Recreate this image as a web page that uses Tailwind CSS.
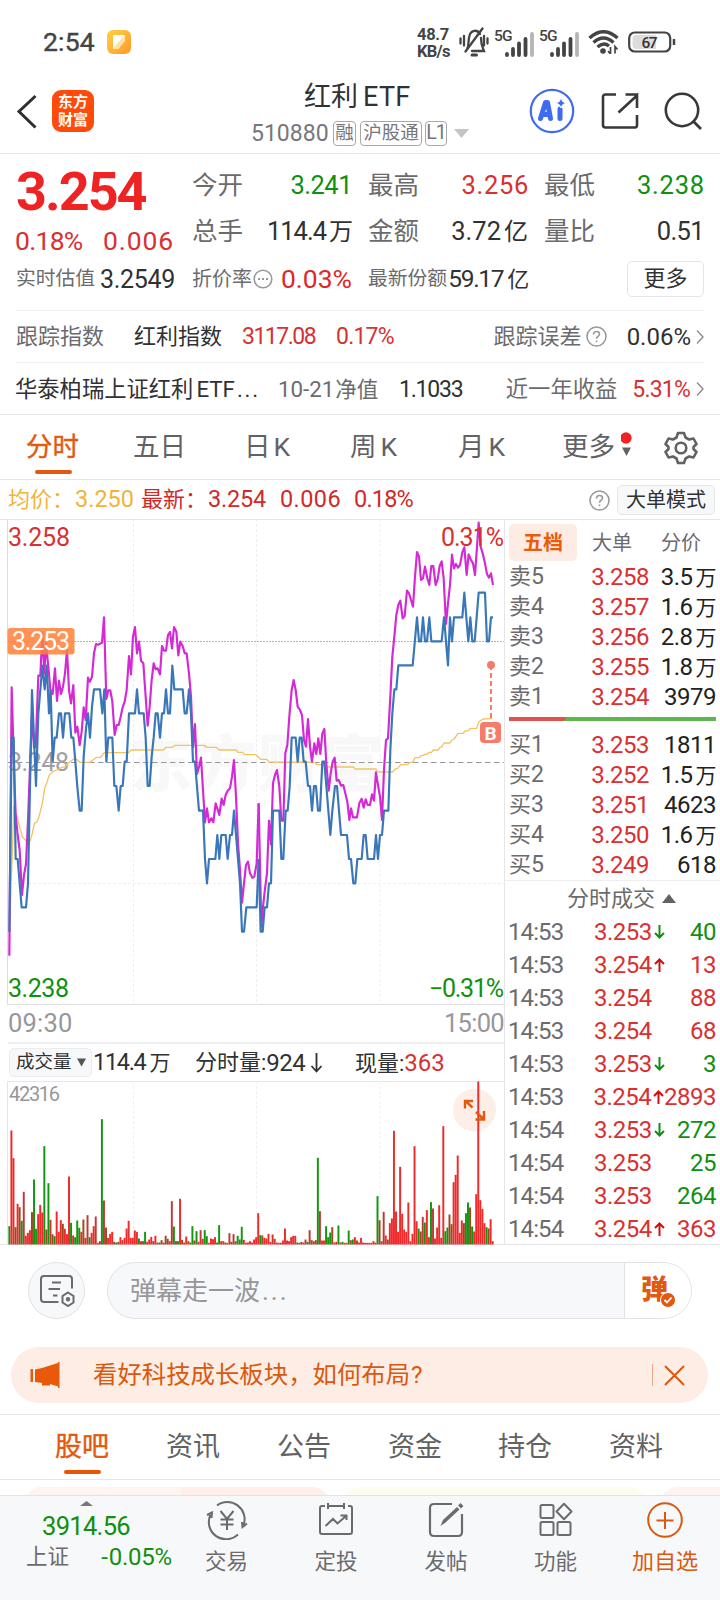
<!DOCTYPE html>
<html lang="zh-CN">
<head>
<meta charset="utf-8">
<title>红利ETF 510880</title>
<script src="https://cdn.jsdelivr.net/npm/@tailwindcss/browser@4"></script>
</head>
<body class="w-[720px] h-[1600px] overflow-hidden bg-white text-[#303133] [font-family:Roboto,'Noto_Sans_CJK_SC',sans-serif] whitespace-nowrap leading-none">
<div class="flex flex-col h-[1600px]">

<!-- status bar -->
<div class="h-[84px] shrink-0 flex items-center pl-[43px] pr-[40px] text-[#444]">
  <span class="text-[26.500px] w-[64px] pt-px tracking-[0.200px] [-webkit-text-stroke:0.4px_#444]">2:54</span>
  <svg width="24" height="24" viewBox="0 0 24 24"><defs><linearGradient id="note" x1="0" y1="0" x2="1" y2="1"><stop offset="0" stop-color="#ffd044"/><stop offset="1" stop-color="#ff9a2a"/></linearGradient></defs><rect width="24" height="24" rx="6" fill="url(#note)"/><path d="M6 5H18L6 19Z" fill="#fff"/><path d="M18 5V11L11.500 19H6Z" fill="#ffe3a6"/></svg>
  <div class="ml-[286px] w-[36px] pt-[2px] text-[16.500px] leading-[17.500px] font-bold"><div class="tracking-[-0.300px]">48.7</div><div class="tracking-[-0.700px]">KB/s</div></div>
  <svg class="ml-[6px]" width="30" height="34" viewBox="0 0 30 34" fill="none" stroke="#444" stroke-width="2.300" stroke-linecap="round"><path d="M1.500 13.500V18.500M5 11V20.500M25 11V20.500M28.500 13.500V18.500"/><path d="M8.500 23C10 20 9 15 10.500 10.500C12 5 18.500 4 21 9M22 13C22 20 23.500 22 25 26H13"/><path d="M6.500 26.500L23.500 3.500"/><path d="M13 30H17.500" stroke-width="3"/></svg>
  <div class="flex ml-[5px]">
    <div class="flex w-[45px] h-[31px]"><span class="text-[15.500px] font-medium w-[11px] pt-[2px] tracking-[-0.700px]">5G</span><svg class="mt-[3px]" width="31" height="27" viewBox="0 0 31 27" stroke-width="3.800" stroke="#444" stroke-linecap="round"><path d="M2 25V24M8 25V19M14 25V13.500M20.500 25V9"/><path d="M27 25V4" stroke="#b5b5b5"/></svg></div>
    <div class="flex w-[45px] h-[31px]"><span class="text-[15.500px] font-medium w-[11px] pt-[2px] tracking-[-0.700px]">5G</span><svg class="mt-[3px]" width="31" height="27" viewBox="0 0 31 27" stroke-width="3.800" stroke="#444" stroke-linecap="round"><path d="M2 25V24M8 25V19M14 25V13.500M20.500 25V9"/><path d="M27 25V4" stroke="#b5b5b5"/></svg></div>
  </div>
  <svg class="ml-[4px]" width="31" height="24" viewBox="0 0 31 24" fill="none" stroke="#444" stroke-width="3.400"><path d="M1.500 8Q15.500-4.500 29.500 8"/><path d="M5.500 12.500Q15.500 3.500 25.500 12.500"/><path d="M9.500 17Q15.500 11.500 21 16"/><circle cx="15" cy="21" r="2.800" fill="#444" stroke="none"/><path d="M22.500 17V24L20 21M27 23.500V16.500L29.500 19.500" stroke-width="1.700"/></svg>
  <svg class="ml-[9px]" width="48" height="22" viewBox="0 0 48 22"><rect x="1.200" y="1.500" width="41" height="19" rx="5.500" fill="#fff" stroke="#444" stroke-width="2.200"/><path d="M8 4H28V18H8Q4.500 18 4.500 14V8Q4.500 4 8 4" fill="#dcdcdc"/><path d="M46 8V14" stroke="#444" stroke-width="2.500"/><text x="21.500" y="16.500" text-anchor="middle" font-size="15.500" fill="#333" font-weight="500" textLength="16">67</text></svg>
</div>

<!-- title bar -->
<div class="h-[70px] shrink-0 border-b border-[#e6e6e8] flex items-center relative">
  <svg class="ml-[16px] mb-[14px]" width="22" height="36" viewBox="0 0 22 36" fill="none" stroke="#2f2f31" stroke-width="3"><path d="M19.500 2L3 17.500L19.500 33.500"/></svg>
  <div class="ml-[14px] mb-[15px] w-[42px] h-[42px] rounded-[9px] bg-[#ff4a09] text-white text-[15px] font-bold leading-[18px] text-center pt-[3px]">东方<br>财富</div>
  <div class="flex flex-col absolute left-[251px] top-[-5px] w-[220px]">
    <div class="h-[36px] pl-[53px] text-[27px] leading-[36px]">红利<span class="ml-[5px] tracking-[0.300px]">ETF</span></div>
    <div class="h-[36px] flex items-center gap-[3px] text-[#77777a]">
      <span class="text-[23px] w-[79px]">510880</span>
      <span class="border border-[#a8a8aa] rounded-[4px] h-[25px] w-[23px] flex items-center justify-center text-[18.500px]">融</span>
      <span class="border border-[#a8a8aa] rounded-[4px] h-[25px] w-[62px] flex items-center justify-center text-[18.500px] ml-px">沪股通</span>
      <span class="border border-[#a8a8aa] rounded-[4px] h-[25px] w-[22px] flex items-center justify-center text-[19.500px] tracking-[-1px]">L1</span>
      <svg class="ml-[4px]" width="15" height="9" viewBox="0 0 15 9"><path d="M0 0H15L7.500 9Z" fill="#c4c4c6"/></svg>
    </div>
  </div>
  <div class="ml-auto flex items-center gap-[25px] pr-[18px] mb-[15px]">
    <svg class="mr-[1px]" width="46" height="46" viewBox="0 0 46 46"><circle cx="23" cy="23" r="21.200" fill="#fff" stroke="#3f6bf0" stroke-width="2.200"/><g fill="none" stroke="#3f6bf0" stroke-width="5" stroke-linejoin="round" stroke-linecap="round"><path d="M11.500 30.500L16.500 14.500H18.500L21.500 30.500M14.500 26.500H20.500"/><path d="M31 21V30.500"/></g><path d="M32 9.500L33.600 13.400L37 15L33.600 16.800L32 20L30.400 16.800L27 15L30.400 13.400Z" fill="#3f6bf0" stroke="#fff" stroke-width="1"/></svg>
    <svg width="38" height="38" viewBox="0 0 38 38" fill="none" stroke="#38383a" stroke-width="2.600"><path d="M15 2.500H4.500Q2 2.500 2 5V33Q2 35.500 4.500 35.500H34Q36 35.500 36 33V23M36 16V3.500L17.500 20.500M24.500 2.500H36.500"/></svg>
    <svg width="38" height="38" viewBox="0 0 38 38" fill="none" stroke="#38383a" stroke-width="2.600"><circle cx="18" cy="18" r="16.200"/><path d="M29 29L37 37"/></svg>
  </div>
</div>

<!-- quote panel -->
<div class="h-[261px] shrink-0 border-b border-[#e6e6e8] px-[16px] flex flex-col">
  <div class="h-[156px] flex">
    <div class="w-[176px] flex flex-col">
      <div class="h-[76px] flex items-center text-[54px] font-bold text-[#ee2424] tracking-[-2px]">3.254</div>
      <div class="h-[22px] flex items-center text-[26.500px] text-[#d93030]"><span class="w-[88px] tracking-[-0.700px] ml-[-1px]">0.18%</span><span class="tracking-[0.900px]">0.006</span></div>
      <div class="h-[52px] mt-px flex items-center text-[19.800px] text-[#6b6b6e]"><span class="w-[84px]">实时估值</span><span class="text-[25px] text-[#303133] tracking-[-0.300px]">3.2549</span></div>
    </div>
    <div class="w-[512px] grid grid-cols-[160px_16px_160px_16px_160px] grid-rows-[47px_46px_48px] pt-[8px] items-center text-[25.500px] text-[#6b6b6e]">
      <div class="flex justify-between"><span>今开</span><span class="text-[#109010] tracking-[-0.500px]">3.241</span></div><i></i>
      <div class="flex justify-between"><span>最高</span><span class="text-[#d93030] tracking-[0.700px] mr-[-1px]">3.256</span></div><i></i>
      <div class="flex justify-between"><span>最低</span><span class="text-[#109010] tracking-[0.800px] mr-[-1px]">3.238</span></div>
      <div class="flex justify-between"><span>总手</span><span class="text-[#303133] tracking-[-1px]">114.4<span class="ml-[3px] text-[24px]">万</span></span></div><i></i>
      <div class="flex justify-between"><span>金额</span><span class="text-[#303133]">3.72<span class="ml-[3px] text-[24px]">亿</span></span></div><i></i>
      <div class="flex justify-between"><span>量比</span><span class="text-[#303133] tracking-[-0.600px]">0.51</span></div>
      <div class="flex justify-between items-center text-[20px]"><span>折价率</span><svg class="mr-auto ml-[1px]" width="20" height="20" viewBox="0 0 20 20" fill="none" stroke="#9a9a9c" stroke-width="1.600"><circle cx="10" cy="10" r="8.800"/><path d="M5 10H7M9 10H11M13 10H15" stroke-width="2"/></svg><span class="text-[26.500px] text-[#e02828]">0.03%</span></div><i></i>
      <div class="flex justify-between items-center text-[19.800px]"><span>最新份额</span><span class="text-[24.500px] text-[#303133] tracking-[-1.300px]">59.17<span class="ml-[4px] text-[22px]">亿</span></span></div><i></i>
      <div class="ml-auto w-[77px] h-[36px] border border-[#e4e5e8] rounded-[5px] flex items-center justify-center text-[22px] text-[#303133]">更多</div>
    </div>
  </div>
  <div class="h-[52px] border-t border-[#f2f2f4] flex items-center text-[22px] text-[#6b6b6e]">
    <span class="w-[118px]">跟踪指数</span><span class="w-[108px] text-[#303133]">红利指数</span><span class="w-[94px] text-[#d93030] text-[23px] tracking-[-1.500px]"><span>3117.08</span></span><span class="text-[#d93030] text-[23px] tracking-[-0.800px]">0.17%</span>
    <span class="ml-auto">跟踪误差</span><svg class="ml-[4px] mr-[20px]" width="21" height="21" viewBox="0 0 21 21" fill="none" stroke="#9a9a9c" stroke-width="1.600"><circle cx="10.500" cy="10.500" r="9.500"/><path d="M7.500 8.500Q7.500 5.500 10.500 5.500Q13.500 5.500 13.500 8Q13.500 9.500 11.800 10.500Q10.500 11.300 10.500 12.800M10.500 14.500V16.300"/></svg><span class="text-[#303133] text-[24px]">0.06%</span>
    <svg class="ml-[5px]" width="8" height="14" viewBox="0 0 8 14" fill="none" stroke="#8c8c8e" stroke-width="1.400"><path d="M1 0.500L7 7L1 13.500"/></svg>
  </div>
  <div class="h-[52px] pt-px border-t border-[#f2f2f4] flex items-center text-[22.300px] text-[#6b6b6e]">
    <span class="w-[263px] text-[#303133] ml-[-1px]">华泰柏瑞上证红利<span class="ml-[3px]">ETF</span><span class="tracking-[1.800px] ml-[2px]">...</span></span><span class="w-[121px]">10-21<span class="ml-[1px] text-[21.500px]">净值</span></span><span class="text-[#303133] text-[23px] tracking-[-1.200px]">1.1033</span>
    <span class="ml-auto mr-[15px]">近一年收益</span><span class="text-[#d93030] text-[23px] tracking-[-0.800px]">5.31%</span>
    <svg class="ml-[6px]" width="8" height="14" viewBox="0 0 8 14" fill="none" stroke="#8c8c8e" stroke-width="1.400"><path d="M1 0.500L7 7L1 13.500"/></svg>
  </div>
</div>

<!-- period tabs -->
<div class="h-[65px] pt-px shrink-0 border-b border-[#e6e6e8] flex items-center text-[26.500px] text-[#626265] relative">
  <span class="ml-[26px] w-[107px] text-[#e2590f] [-webkit-text-stroke:0.4px_#e2590f]">分时</span>
  <span class="w-[111px]">五日</span>
  <span class="w-[106px]">日<span class="ml-[3px]">K</span></span>
  <span class="w-[108px]">周<span class="ml-[4px]">K</span></span>
  <span class="w-[104px]">月<span class="ml-[4px]">K</span></span>
  <span class="w-[59px]">更多</span>
  <svg class="mb-[6px]" width="12" height="26" viewBox="0 0 12 26"><circle cx="5" cy="6" r="5.700" fill="#f02222"/><path d="M1 15.500H10L5.500 24Z" fill="#626265"/></svg>
  <svg class="ml-[31px]" width="34" height="34" viewBox="0 0 34 34" fill="none" stroke="#626265" stroke-width="2.600" stroke-linejoin="round"><path d="M14 2H20L21.500 6.500L25 8.500L29.500 7.500L32.500 13L29.500 16V18L32.500 21L29.500 26.500L25 25.500L21.500 27.500L20 32H14L12.500 27.500L9 25.500L4.500 26.500L1.500 21L4.500 18V16L1.500 13L4.500 7.500L9 8.500L12.500 6.500Z"/><circle cx="17" cy="17" r="5.300"/></svg>
  <div class="absolute left-[35px] bottom-[5px] w-[37px] h-[4px] rounded-full bg-[#e2590f]"></div>
</div>

<!-- price summary -->
<div class="h-[39px] pt-px shrink-0 flex items-center text-[22px] text-[#cf2a2a] pl-[8px] pr-[5px]">
  <span class="w-[67px] text-[#f2b33a]">均价：</span><span class="w-[66px] text-[#f2b33a] text-[23.500px]">3.250</span>
  <span class="w-[67px]">最新：</span><span class="w-[72px] text-[23.500px] tracking-[-0.200px]">3.254</span><span class="w-[74px] text-[23.500px] tracking-[0.400px]">0.006</span><span class="text-[23.500px] tracking-[-0.800px]">0.18%</span>
  <svg class="ml-auto mr-[7px]" width="21" height="21" viewBox="0 0 21 21" fill="none" stroke="#9a9a9c" stroke-width="1.600"><circle cx="10.500" cy="10.500" r="9.500"/><path d="M7.500 8.500Q7.500 5.500 10.500 5.500Q13.500 5.500 13.500 8Q13.500 9.500 11.800 10.500Q10.500 11.300 10.500 12.800M10.500 14.500V16.300"/></svg>
  <div class="w-[98px] h-[30px] rounded-[5px] border border-[#e4e6ea] bg-[#f7f8fa] flex items-center justify-center text-[20px] text-[#303133]">大单模式</div>
</div>

<!-- chart + order book -->
<div class="h-[726px] shrink-0 border-t border-b border-[#e6e6e8] flex">
  <div class="w-[505px] border-r border-[#e6e6e8] flex flex-col">
    <svg class="shrink-0" width="504" height="485" viewBox="0 520 504 485" fill="none">
      <g stroke="#efeff1" stroke-width="1" stroke-dasharray="3 2"><path d="M133.500 519V1004M256.500 519V1004M380 519V1004M8 883.500H504"/></g>
      <path d="M7.500 519V1004.500H504" stroke="#dedee0"/>
      <g fill="#f8f8f9" font-size="62" font-weight="900"><text x="130" y="787" textLength="254">东方财富</text></g>
      <path d="M8 641.500H504" stroke="#fb9d78" stroke-width="1" stroke-dasharray="2 1"/>
      <path d="M8 762.500H504" stroke="#97979a" stroke-width="1.200" stroke-dasharray="5.500 3.500"/>
      <text x="8" y="771" font-size="25" fill="#a0a0a2" textLength="61">3.248</text>
      <g transform="translate(0 510) scale(.33333)" stroke-linejoin="round">
        <g stroke="#f4c265" stroke-width="4">
          <polyline points="28,1265 38,1000 41,890 50,915 60,955 68,982 82,996 90,994 97,970 103,940 110,937 117,920 127,880 134,835 140,820 147,797 158,785 170,780 183,773 195,770 208,757 220,748 228,746 240,757 270,757 290,742 302,742 313,728 385,728 393,720 490,720 498,712 517,712 525,706 612,706 622,712 648,712 658,720 708,720 714,727 727,727 735,734 768,734"/>
          <polyline transform="translate(750 0)" points="18,734 32,748 50,748 57,756 195,757 200,764 225,764 230,771 310,771 316,777 378,777 384,786 428,786 436,777 443,775 452,764 473,764 479,757 488,757 495,743 507,743 513,737 519,737 525,733 531,733 538,727 544,727 550,720 564,720 570,712 576,710 582,699 600,699 606,690 612,687 624,670 640,670 645,663 655,662 660,656 680,655 686,636 699,627 727,626"/>
        </g>
        <g stroke="#d42ad6" stroke-width="6.500">
          <polyline points="28,1337 35,532 41,740 47,915 53,975 59,1020 66,1155 72,1095 78,1062 84,930 90,770 96,610 102,712 107,712 115,497 121,497 127,367 133,490 138,400 146,480 152,552 158,552 165,475 171,573 177,512 183,552 189,530 195,490 201,420 207,540 213,580 220,525 226,668 232,650 239,705 245,665 251,592 257,630 264,503 270,515 276,500 282,430 288,402 294,404 306,398 312,322 319,567 325,541 331,541 337,575 344,675 350,645 356,645 362,620 368,592 374,575 380,540 387,438 393,493 399,380 405,351 411,430 417,395 423,452 430,460 437,560 443,647 449,590 455,510 461,460 467,478 473,475 480,493 486,408 492,422 498,422 504,375 510,366 516,415 522,351 529,365 535,436 541,395 548,408 554,430 560,430 567,490 573,560 579,712 585,642 591,792 597,770 603,743 609,840 615,937 621,895 627,937 634,925 640,937 647,880 652,895 658,915 665,866 671,885 677,855 683,842 690,835 696,800 702,750 708,860 714,1000 720,1080 726,1178 732,1120 738,1065 744,1055 750,1090 757,1103 763,1100 770,1060 776,880"/>
          <polyline transform="translate(750 0)" points="26,880 34,1250 38,1200 44,1145 51,1090 57,932 63,1003 69,820 75,795 81,780 88,830 94,932 100,932 106,730 112,705 118,620 125,540 131,510 137,540 143,590 150,600 156,615 162,690 168,710 174,627 180,710 186,755 193,700 199,732 205,685 211,732 217,670 223,657 229,760 236,842 242,790 248,755 254,743 260,812 266,810 273,827 280,825 286,850 292,875 298,930 303,895 309,922 321,922 328,880 335,866 341,893 347,868 353,885 360,885 366,853 372,872 378,787 384,825 390,860 396,930 402,780 408,690 414,685 421,560 427,440 433,380 439,315 445,285 451,272 458,325 464,318 471,242 477,250 483,270 489,290 495,200 501,126 507,140 513,210 519,205 525,170 532,205 538,225 544,168 550,168 557,225 563,208 569,168 575,154 581,205 588,342 594,280 600,225 606,134 612,175 618,162 624,173 630,165 637,127 643,112 650,195 656,133 663,150 669,160 675,195 680,125 686,38 692,110 698,130 705,160 711,192 717,203 723,190 729,225"/>
        </g>
        <g stroke="#3a77b8" stroke-width="6.500">
          <polyline points="28,1265 35,683 41,683 47,1047 53,1047 65,1192 78,1192 84,1120 90,830 96,540 108,828 115,610 121,540 127,467 134,538 140,467 147,610 152,540 158,755 164,683 170,683 177,610 183,610 189,683 195,610 208,610 214,683 220,683 226,755 232,830 239,902 245,902 251,740 258,655 264,610 270,683 276,590 282,538 300,538 307,610 313,538 319,755 325,683 337,683 343,828 349,828 356,902 362,828 368,828 374,755 380,755 387,610 405,610 411,538 417,610 431,610 437,683 443,828 449,828 455,740 461,683 467,610 473,610 480,683 486,610 492,610 498,538 504,610 510,610 517,467 523,538 548,538 554,610 560,610 567,538 573,610 579,755 585,755 591,830 597,902 609,902 615,1047 621,1120 627,1047 646,1047 652,975 658,1047 664,975 677,975 683,1047 690,975 696,975 702,902 708,975 714,1047 720,1120 726,1265 732,1265 739,1192 770,1192 776,1047"/>
          <polyline transform="translate(750 0)" points="26,1047 32,1265 38,1265 44,1192 51,1192 57,1120 63,1120 69,902 88,902 94,1047 100,1047 107,902 113,902 119,830 125,683 137,683 143,755 149,683 155,683 161,755 167,755 174,828 180,828 186,902 192,828 198,828 204,902 210,902 217,755 223,755 229,828 241,975 247,902 255,828 261,828 267,902 273,975 291,975 297,1047 303,1047 310,1120 316,1120 322,1047 335,1047 341,975 347,975 353,1047 372,1047 378,975 384,1047 390,975 396,975 402,902 415,902 421,720 427,610 433,538 439,538 445,466 488,466 494,400 501,322 507,394 513,394 519,322 525,394 531,394 538,322 544,394 575,394 582,322 588,394 594,466 600,322 606,394 612,322 637,322 643,248 649,322 655,394 661,322 667,394 674,394 680,322 686,248 705,248 711,394 717,394 723,322 729,322"/>
        </g>
      </g>
      <g font-size="25">
        <text x="8" y="546" fill="#d93030" textLength="62">3.258</text>
        <text x="441" y="546" fill="#d93030" textLength="63">0.31%</text>
        <text x="8" y="997" fill="#109010" textLength="61">3.238</text>
        <text x="429" y="997" fill="#109010" textLength="75">−0.31%</text>
        <rect x="7.500" y="628" width="67" height="26.500" rx="3" fill="#ff8038" fill-opacity=".86"/>
        <text x="12" y="650" fill="#fff" textLength="58">3.253</text>
      </g>
      <path d="M491 665V718" stroke="#f77b6b" stroke-width="2" stroke-dasharray="5 3"/><circle cx="491" cy="665" r="4" fill="#f77b6b"/>
      <rect x="480" y="722" width="21" height="21" rx="4" fill="#f77b6b"/><text x="490.500" y="739.500" font-size="19" font-weight="700" fill="#fff" text-anchor="middle">B</text>
    </svg>
    <div class="h-[37px] pt-px shrink-0 flex items-center justify-between pl-[8px] text-[25.500px] text-[#97979a]"><span class="tracking-[0.200px]">09:30</span><span class="tracking-[-0.700px]">15:00</span></div>
    <div class="h-[39px] shrink-0 ml-[8px] border-t-2 border-[#efeff1] flex items-center text-[23px]">
      <div class="w-[83px] h-[29px] ml-px rounded-[5px] border border-[#ebecef] bg-[#f7f8fa] flex items-center pl-[6px] text-[18.500px]">成交量<svg class="ml-[5px]" width="9" height="9" viewBox="0 0 9 9"><path d="M0 0.500H9L4.500 8.500Z" fill="#555"/></svg></div>
      <span class="w-[102px] text-[23.500px] tracking-[-1.300px] ml-px">114.4<span class="ml-[4px] text-[21px]">万</span></span>
      <span class="w-[160px] text-[22px] flex items-center">分时量:<span class="text-[24px] tracking-[-0.500px]">924</span><svg class="ml-[5px]" width="13" height="20" viewBox="0 0 13 20" fill="none" stroke="#303133" stroke-width="1.800"><path d="M6.500 0V18M1.500 13L6.500 18.500L11.500 13"/></svg></span>
      <span class="text-[22px]">现量:<span class="text-[24px] text-[#d93030]">363</span></span>
    </div>
    <svg class="shrink-0" width="504" height="164" viewBox="0 1081 504 164">
      <path d="M7.500 1245V1081.500H504" fill="none" stroke="#e6e6e8"/>
      <path d="M133.500 1081V1244M256.500 1081V1244M380 1081V1244" stroke="#f1f1f3" stroke-dasharray="3 2"/>
      <text x="9" y="1101" font-size="20" fill="#97979a" textLength="51">42316</text>
      <circle cx="474.500" cy="1110" r="21.500" fill="#fdefe7"/>
      <g id="volume"></g>
      <path d="M472.500 1107.500L465.500 1101M465 1108.500V1101H473M476 1112L484 1119.500M484 1111V1119.500H475.500" fill="none" stroke="#e2590f" stroke-width="2.400"/>
    </svg>
  </div>
  <div class="w-[215px] flex flex-col pl-[4px] pr-[4px] text-[#6b6b6e]">
    <div class="h-[42px] shrink-0 flex items-center text-[20px] pt-[3px]">
      <span class="w-[68px] h-[37px] rounded-[5px] bg-[#fdece3] text-[#ee5a0c] font-bold flex items-center justify-center">五档</span>
      <span class="ml-[15px] w-[69px]">大单</span><span>分价</span>
    </div>
    <div id="asks" class="h-[149px] shrink-0"></div>
    <div class="h-[4px] mt-[6px] shrink-0 flex bg-[#5fb650]"><svg width="60" height="4"><path d="M0 0H58L55 4H0Z" fill="#e05252"/></svg></div>
    <div id="bids" class="h-[159px] pt-[9px] shrink-0"></div>
    <div class="h-[36px] shrink-0 border-t border-[#efeff1] -mx-[4px] pl-[18px] flex items-center justify-center text-[22px] gap-[7px]">分时成交<svg width="14" height="9" viewBox="0 0 14 9"><path d="M0 9L7 0L14 9Z" fill="#626265"/></svg></div>
    <div id="ticks" class="shrink-0"></div>
  </div>
</div>

<!-- comment bar -->
<div class="h-[90px] shrink-0 flex items-center pl-[28px] pr-[28px]">
  <div class="w-[57px] h-[57px] rounded-full border border-[#e0e2e6] bg-[#f7f8fa] flex items-center justify-center">
    <svg width="36" height="34" viewBox="0 0 36 34" fill="none" stroke="#6b6b6e" stroke-width="2"><path d="M19.500 29H5Q2 29 2 26V6Q2 3 5 3H30Q33 3 33 6V15.500M13 9.500H22M9.500 16H21M14 22.500H18.500"/><path d="M29 19.500L34.500 23V29.500L29 33L23.500 29.500V23Z"/><circle cx="29" cy="26.200" r="1.200"/></svg>
  </div>
  <div class="ml-[22px] w-[585px] h-[57px] rounded-full border border-[#e0e2e6] bg-[#f7f8fa] flex overflow-hidden">
    <div class="flex-1 flex items-center pl-[22px] pt-px text-[26px] text-[#97979a]">弹幕走一波<span class="ml-[2px] tracking-[2px]">...</span></div>
    <div class="w-[67px] border-l border-[#e0e2e6] bg-white flex items-center pl-[16px]">
      <div class="relative text-[27px] font-black text-[#e2590f] leading-[30px]">弹<svg class="absolute left-[19px] top-[17px]" width="16" height="16" viewBox="0 0 16 16"><circle cx="8" cy="8" r="7.500" fill="#e2590f" stroke="#fff"/><path d="M4.500 8L7 10.500L11.500 5.500" fill="none" stroke="#fff" stroke-width="1.800"/></svg></div>
    </div>
  </div>
</div>
<div class="h-[80px] shrink-0 flex flex-col pt-[12px] pl-[11px] pr-[12px] border-b border-[#e6e6e8]">
  <div class="h-[56px] rounded-full bg-[#fdede4] flex items-center pl-[19px] pr-[23px] text-[24.400px] text-[#d9590f]">
    <svg width="30" height="26" viewBox="0 0 30 26" fill="#e8590a"><path d="M0.500 7H3V20H0.500ZM5 7.500L12 6L28 1V0H29.500V26H28V24.500L20 22V23.500H12V21L5 20Z"/></svg>
    <span class="ml-[33px] pt-px">看好科技成长板块，如何布局<span class="ml-px">?</span></span>
    <span class="ml-auto w-px h-[22px] bg-[#eda983]"></span>
    <svg class="ml-[11px]" width="21" height="21" viewBox="0 0 21 21" stroke="#d9590f" stroke-width="2"><path d="M1 1L20 20M20 1L1 20"/></svg>
  </div>
</div>

<!-- section tabs -->
<div class="h-[65px] pt-px shrink-0 border-b border-[#e6e6e8] flex items-center pl-[55px] text-[27px] text-[#626265] relative">
  <span class="w-[111px] text-[#e2590f] [-webkit-text-stroke:0.4px_#e2590f]">股吧</span><span class="w-[111px]">资讯</span><span class="w-[111px]">公告</span><span class="w-[110px]">资金</span><span class="w-[111px]">持仓</span><span>资料</span>
  <div class="absolute left-[64px] bottom-[5px] w-[37px] h-[4px] rounded-full bg-[#ea5504]"></div>
</div>
<div class="h-[15px] shrink-0 pt-[7px] pl-[24px] flex gap-[13px] overflow-hidden">
  <div class="w-[306px] h-[40px] shrink-0 rounded-[18px] overflow-hidden flex bg-[#feefeb]"><div class="w-[157px] bg-[#fef5f1]"></div></div>
  <div class="w-[304px] h-[40px] shrink-0 rounded-[18px] bg-[#fefcee]"></div>
  <div class="w-[100px] h-[40px] shrink-0 rounded-[18px] bg-[#fef3f0]"></div>
</div>

<!-- bottom navigation -->
<div class="h-[105px] shrink-0 border-t border-[#e2e3e6] bg-[#f7f8fa] flex text-[21.500px] text-[#6b6b6e]">
  <div class="w-[172px] flex flex-col items-center pt-[5px]">
    <svg class="shrink-0" width="13" height="5" viewBox="0 0 13 5"><path d="M0 5L6.500 0L13 5Z" fill="#77777a"/></svg>
    <div class="h-[31px] flex items-center text-[25.500px] mt-[5px] text-[#109010] tracking-[-0.700px]">3914.56</div>
    <div class="h-[30px] w-full flex items-center justify-between pl-[26px]"><span>上证</span><span class="text-[24px] text-[#109010] tracking-[-0.200px]"><span class="mr-px">-</span>0.05%</span></div>
  </div>
  <div class="w-[109px] flex flex-col items-center pt-[4px]">
    <svg class="shrink-0" width="42" height="40" viewBox="0 0 42 40" fill="none" stroke="#6b6b6e" stroke-width="2"><path d="M11 5.500A17.200 17.200 0 0 1 37.600 25M41 23.500L36.500 27L36 22M32 34.500A17.200 17.200 0 0 1 4.400 15M1 15L6 12.500L5.500 18"/><path d="M14.500 11L21 19L27.500 11M14.500 19.500H27.500M14.500 24.500H27.500M21 19V30"/></svg>
    <span class="mt-[11px]">交易</span>
  </div>
  <div class="w-[110px] flex flex-col items-center pt-[4px]">
    <svg class="shrink-0" width="36" height="40" viewBox="0 0 36 40" fill="none" stroke="#6b6b6e" stroke-width="2"><path d="M7 6H4Q2 6 2 8V32Q2 34 4 34H32Q34 34 34 32V8Q34 6 32 6H30M10 6H26M10 3V9M26 3V9M7.500 26L15 19L19.500 23.500L28 16M22.500 15.500H28.500V20"/></svg>
    <span class="mt-[11px]">定投</span>
  </div>
  <div class="w-[110px] flex flex-col items-center pt-[4px]">
    <svg class="shrink-0" width="36" height="40" viewBox="0 0 36 40" fill="none" stroke="#6b6b6e" stroke-width="2.200"><path d="M24 4H6Q2 4 2 8V32Q2 36 6 36H30Q34 36 34 32V14"/><path d="M12.500 26L15 20L29 7L31.500 9.500L17.500 22.500Z" fill="#6b6b6e" stroke="none"/><path d="M31.500 7L34 4.500" stroke-width="4"/></svg>
    <span class="mt-[11px]">发帖</span>
  </div>
  <div class="w-[109px] flex flex-col items-center pt-[4px]">
    <svg class="shrink-0" width="34" height="40" viewBox="0 0 34 40" fill="none" stroke="#6b6b6e" stroke-width="2"><rect x="1.500" y="5" width="13" height="13" rx="1.500"/><rect x="1.500" y="22" width="13" height="13" rx="1.500"/><rect x="18.500" y="22" width="13" height="13" rx="1.500"/><path d="M25 3.700L32.500 11.500L25 19.300L17.500 11.500Z" stroke-linejoin="round"/></svg>
    <span class="mt-[11px]">功能</span>
  </div>
  <div class="w-[110px] flex flex-col items-center pt-[4px] text-[#d9590f]">
    <svg class="shrink-0" width="36" height="40" viewBox="0 0 36 40" fill="none" stroke="#d9590f" stroke-width="2"><circle cx="18" cy="20" r="16.800"/><path d="M18 12V29M9.500 20.500H26.500"/></svg>
    <span class="mt-[11px] text-[22px]">加自选</span>
  </div>
</div>
</div>

<script>
// level, price, volume
const level = ([n, p, v]) => `<div class="h-[29.9px] flex items-center"><span class="w-[60px] text-[23px]"><span class="text-[22px]">${n[0]}</span>${n[1]}</span><span class="w-[80px] text-right text-[24px] tracking-[-0.5px] text-[#d93030]">${p}</span><span class="flex-1 text-right text-[24px] tracking-[-0.5px] text-[#222]">${v.replace('万', '<span class="text-[21px] ml-[3px]">万</span>')}</span></div>`;
document.getElementById('asks').innerHTML = [['卖5','3.258','3.5万'],['卖4','3.257','1.6万'],['卖3','3.256','2.8万'],['卖2','3.255','1.8万'],['卖1','3.254','3979']].map(level).join('');
document.getElementById('bids').innerHTML = [['买1','3.253','1811'],['买2','3.252','1.5万'],['买3','3.251','4623'],['买4','3.250','1.6万'],['买5','3.249','618']].map(level).join('');

// time, price, direction, volume, volume colour
const arrow = {
  d: '<svg width="11" height="14" viewBox="0 0 11 14" fill="none" stroke="#109010" stroke-width="2"><path d="M5.500 0V12.500M1 8L5.500 12.500L10 8"/></svg>',
  u: '<svg width="11" height="14" viewBox="0 0 11 14" fill="none" stroke="#d01010" stroke-width="2"><path d="M5.500 14V1.500M1 6L5.500 1.500L10 6"/></svg>',
  n: ''
};
const tone = { g: 'text-[#109010]', r: 'text-[#d93030]' };
document.getElementById('ticks').innerHTML = [['14:53','3.253','d','40','g'],['14:53','3.254','u','13','r'],['14:53','3.254','n','88','r'],['14:53','3.254','n','68','r'],['14:53','3.253','d','3','g'],['14:53','3.254','u','2893','r'],['14:54','3.253','d','272','g'],['14:54','3.253','n','25','g'],['14:54','3.253','n','264','g'],['14:54','3.254','u','363','r']]
  .map(([t, p, a, v, c]) => `<div class="h-[32.95px] flex items-center text-[24px] tracking-[-0.5px]"><span class="w-[86px] ml-[-1px] tracking-[-0.9px]">${t}</span><span class="w-[60px] text-[#d93030]">${p}</span><span class="w-[11px]">${arrow[a]}</span><span class="flex-1 flex justify-end ${tone[c]}">${v}</span></div>`).join('');

// one entry per minute: colour key + bar height
const bars = 'g55 r342 r259 m52 r122 m112 g71 d158 r26 r35 r43 m97 g195 g47 r91 r119 r96 g295 m45 g184 d74 m31 g25 r99 r38 r73 m62 r47 r31 r204 g65 r27 g22 g72 g50 r38 m75 r20 d88 g22 r35 r55 d84 r5 m10 g376 d132 m51 r20 r32 r38 m8 g6 m8 r22 r13 r20 r48 r71 r20 r20 r42 r38 g18 r10 m10 g38 r8 r15 r23 m10 r26 r6 g6 m13 r6 m26 m17 r10 d130 g54 m10 g10 r137 m14 r6 r24 r10 g6 g55 m12 g40 r8 d43 r17 g43 g25 r5 r18 r16 r22 g6 g58 r10 r10 m6 r5 d34 m8 d31 m10 g26 g15 g53 r14 r5 r6 r10 r6 r15 r22 r94 g28 m27 r20 r18 r32 r8 d30 r17 r6 r5 m5 r12 r48 r12 r10 r22 r26 r26 g6 m5 m8 r6 d15 g8 d43 m13 r10 m13 g260 d100 r12 r12 g55 g22 g36 m52 r6 r8 g57 r6 g8 r5 r5 g42 m13 g15 r22 m12 r6 r20 r6 r5 r5 r5 r5 r10 r6 g145 m73 r10 d98 r27 m15 r64 r78 r341 r99 r38 r233 r92 r45 r38 r126 r10 r32 r295 r70 g48 m39 d83 g66 r103 r22 g127 d108 r18 r51 r118 r20 r355 g40 g51 m90 m61 r187 r209 r267 r35 r72 m64 g94 g126 m111 g54 r39 r151 r489 r133 r107 r64 g52 m48 r76 r10'.split(' ');
const fill = { r: '#ee2a2a', g: '#12950f', m: '#9a4a1c', d: '#c03a34' };
document.getElementById('volume').innerHTML = bars.map((b, i) => {
  const h = b.slice(1) / 3, x = (28 + 6.17 * i) / 3;
  return `<rect x="${(x - 0.95).toFixed(2)}" y="${(1244.5 - h).toFixed(2)}" width="1.95" height="${h.toFixed(2)}" fill="${fill[b[0]]}"/>`;
}).join('');
</script>
</body>
</html>
